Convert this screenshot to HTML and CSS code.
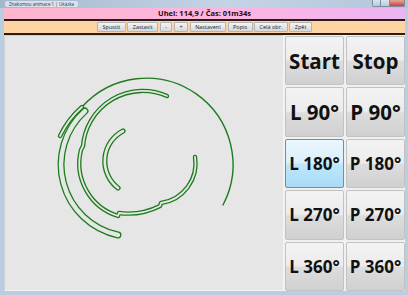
FILE: index.html
```html
<!DOCTYPE html>
<html>
<head>
    <meta charset="utf-8" />
    <title>Znakomou animace 1</title>
    <link rel="stylesheet" href="styles.css">
</head>
<body>
<div class="window">
    <div class="titlebar">
        <span class="title">Znakomou animace 1 | Ukázka</span>
        <div class="controls">
            <span class="min"></span>
            <span class="max"></span>
            <span class="close"></span>
        </div>
    </div>
    <div class="frame">
        <div class="status">Uhel: 114,9 / Čas: 01m34s</div>
        <div class="toolbar">
            <a class="tb">Spustit</a>
            <a class="tb">Zastavit</a>
            <a class="tb">-</a>
            <a class="tb">+</a>
            <a class="tb">Nastavení</a>
            <a class="tb">Popis</a>
            <a class="tb">Celá obr.</a>
            <a class="tb">Zpět</a>
        </div>
        <div class="main">
            <div class="canvas">
                <svg width="278" height="254" viewBox="5 36 278 254">
                    <defs>
                        <path id="b1" d="M 60 136 A 90 90 0 0 1 82 107" />
                        <path id="b2" d="M 85 111 A 72 72 0 0 0 118 235" />
                        <path id="c" d="M 167 96 A 60 60 0 0 0 83 146 L 81 150 A 55 55 0 0 0 118 216 L 119 213 A 70 70 0 0 0 160 206 L 161 203 A 40 40 0 0 0 195 157" />
                        <path id="d" d="M 123 131 A 34 34 0 0 0 118 188" />
                    </defs>
                    <path class="thin" d="M 82 107 A 86.5 86.5 0 0 1 223 205" />
                    <g class="band wide">
                        <use href="#b2" class="out" />
                        <use href="#b2" class="in" />
                    </g>
                    <g class="band">
                        <use href="#b1" class="out" />
                        <use href="#b1" class="in" />
                        <use href="#c" class="out" />
                        <use href="#c" class="in" />
                    </g>
                    <g class="band mid">
                        <use href="#d" class="out" />
                        <use href="#d" class="in" />
                    </g>
                </svg>
            </div>
            <div class="pad">
                <a class="btn">Start</a>
                <a class="btn">Stop</a>
                <a class="btn">L 90°</a>
                <a class="btn">P 90°</a>
                <a class="btn sm hot">L 180°</a>
                <a class="btn sm">P 180°</a>
                <a class="btn sm">L 270°</a>
                <a class="btn sm">P 270°</a>
                <a class="btn sm">L 360°</a>
                <a class="btn sm">P 360°</a>
            </div>
        </div>
    </div>
</div>
</body>
</html>
```

FILE: styles.css
```css
*{margin:0;padding:0;box-sizing:border-box;}
body{background:#b8cce2;font-family:"Open Sans","Noto Sans",sans-serif;}
a{text-decoration:none;cursor:default;}
.window{width:408px;height:295px;display:flex;flex-direction:column;overflow:hidden;}
.titlebar{
    height:8px;
    display:flex;
    align-items:center;
    justify-content:space-between;
    padding:0 3px 0 5px;
    background:linear-gradient(to right, #a3b7ce, #c4d4e5 55%, #b3c6db);
}
.title{
    font-size:4.5px;
    line-height:6px;
    color:#333;
    padding:0 4px;
    background:rgba(255,255,255,0.55);
    border-radius:2px;
}
.controls{display:flex;height:7px;align-self:flex-start;}
.controls span{display:block;height:7px;border:1px solid #7d8ea3;border-top:none;}
.controls .min{width:9px;background:linear-gradient(#dbe5f0, #b9c9da);border-radius:0 0 0 2px;}
.controls .max{width:9px;background:linear-gradient(#dbe5f0, #b9c9da);border-left:none;}
.controls .close{width:15px;background:linear-gradient(#e9a59c, #c8453a);border-left:none;border-radius:0 0 2px 0;}
.frame{
    flex:1;
    display:flex;
    flex-direction:column;
    border-style:solid;
    border-color:#b9cde3;
    border-width:0 3px 4px 4px;
}
.status{
    height:13px;
    line-height:11px;
    text-align:center;
    font-size:7.5px;
    font-weight:bold;
    color:#2c0606;
    background:linear-gradient(to right, #ffb5cd, #fbb5e2 60%, #ecb4f3);
    border-bottom:2px solid #2b1b14;
}
.toolbar{
    height:14px;
    display:flex;
    align-items:center;
    justify-content:center;
    gap:1.5px;
    background:#ffd4a3;
    border-bottom:2px solid #2b1b14;
}
.tb{
    height:10px;
    line-height:8px;
    padding:0 4.5px;
    font-size:5.5px;
    color:#222;
    background:linear-gradient(#f4f4f4, #e6e6e6 50%, #d8d8d8);
    border:1px solid #b4b4b4;
    border-radius:1px;
}
.main{flex:1;display:flex;}
.canvas{
    width:280px;
    background:#e6e6e6;
    border:1px solid;
    border-color:#d0d0d0 #f4f4f4 #f4f4f4 #d0d0d0;
}
.canvas svg{display:block;}
.thin{fill:none;stroke:#1e7c1e;stroke-width:1.4;stroke-linecap:round;}
.band{fill:none;stroke-linecap:round;stroke-linejoin:round;}
.band .out{stroke:#1f7a1f;stroke-width:4.4;}
.band .in{stroke:#e3e8e3;stroke-width:1.8;}
.band.wide .out{stroke-width:7;}
.band.wide .in{stroke-width:4.4;}
.band.mid .out{stroke-width:5.2;}
.band.mid .in{stroke-width:2.6;}
.pad{
    flex:1;
    background:#f0f0f0;
    padding:1px 0 0 1px;
    display:grid;
    grid-template-columns:1fr 1fr;
    grid-template-rows:repeat(5, 1fr);
    gap:2px;
}
.btn{
    display:flex;
    align-items:center;
    justify-content:center;
    font-size:20.5px;
    font-weight:bold;
    color:#111;
    border:1px solid #c2c2c2;
    border-radius:2px;
    background:linear-gradient(#f3f3f3, #ececec 48%, #dddddd 52%, #d0d0d0);
}
.btn.sm{font-size:17px;}
.btn.hot{
    border-color:#5b93c2;
    background:linear-gradient(#eaf6fd, #d9f0fc 48%, #bee6fd 52%, #a9dbf6);
}
```
